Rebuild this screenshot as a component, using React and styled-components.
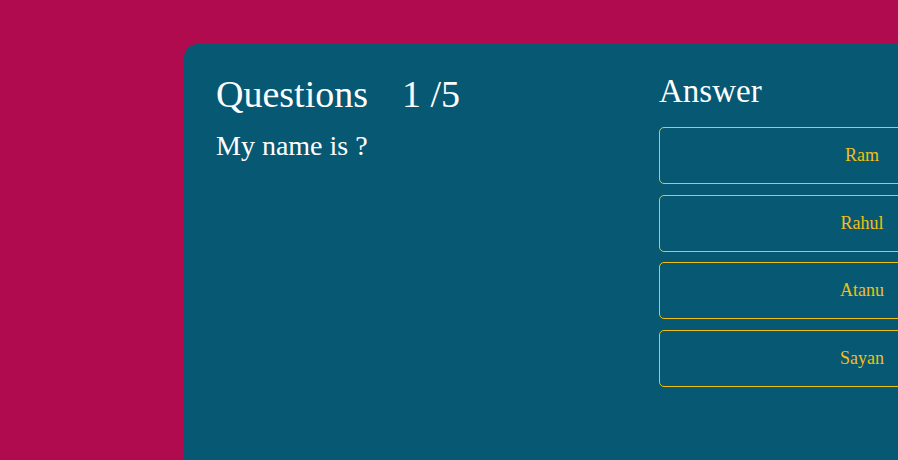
import styled, { createGlobalStyle } from "styled-components";

const GlobalStyle = createGlobalStyle`
  body {
    margin: 0;
    background-color: #b00b4e;
    font-family: "Liberation Serif", "DejaVu Serif", serif;
    overflow: hidden;
  }
`;

const Page = styled.div`
  min-height: 100vh;
  padding: 44px 0 0 184px;
  box-sizing: border-box;
  display: flex;
`;

const Card = styled.div`
  background-color: #075873;
  border-radius: 14px;
  display: flex;
  padding: 26px 32px;
  min-height: 460px;
  width: 1000px;
  flex-shrink: 0;
  box-sizing: border-box;
`;

const QuestionSection = styled.div`
  width: 443px;
  flex-shrink: 0;
  color: white;
`;

const QuestionCount = styled.div`
  font-size: 38px;
  line-height: 48px;
  margin-bottom: 11px;
  display: flex;
  gap: 34px;
`;

const QuestionText = styled.div`
  font-size: 28px;
  line-height: 34px;
`;

const AnswerSection = styled.div`
  display: flex;
  flex-direction: column;
  width: 406px;
  flex-shrink: 0;
`;

const AnswerTitle = styled.div`
  color: white;
  font-size: 33px;
  line-height: 42px;
  margin-bottom: 15px;
`;

const AnswerList = styled.div`
  display: flex;
  flex-direction: column;
  gap: 10.5px;
`;

const AnswerButton = styled.button`
  height: 57px;
  width: 100%;
  background-color: transparent;
  border: 1px solid #f2bf14;
  border-radius: 5px;
  color: #f2bf14;
  font-family: "Liberation Serif", "DejaVu Serif", serif;
  font-size: 18px;
  cursor: pointer;
`;

const answers = ["Ram", "Rahul", "Atanu", "Sayan"];

const App = () => {
  return (
    <>
      <GlobalStyle />
      <Page>
        <Card>
          <QuestionSection>
            <QuestionCount>
              <span>Questions</span>
              <span>1 /5</span>
            </QuestionCount>
            <QuestionText>My name is ?</QuestionText>
          </QuestionSection>
          <AnswerSection>
            <AnswerTitle>Answer</AnswerTitle>
            <AnswerList>
              {answers.map((answer) => (
                <AnswerButton key={answer}>{answer}</AnswerButton>
              ))}
            </AnswerList>
          </AnswerSection>
        </Card>
      </Page>
    </>
  );
};

export default App;
